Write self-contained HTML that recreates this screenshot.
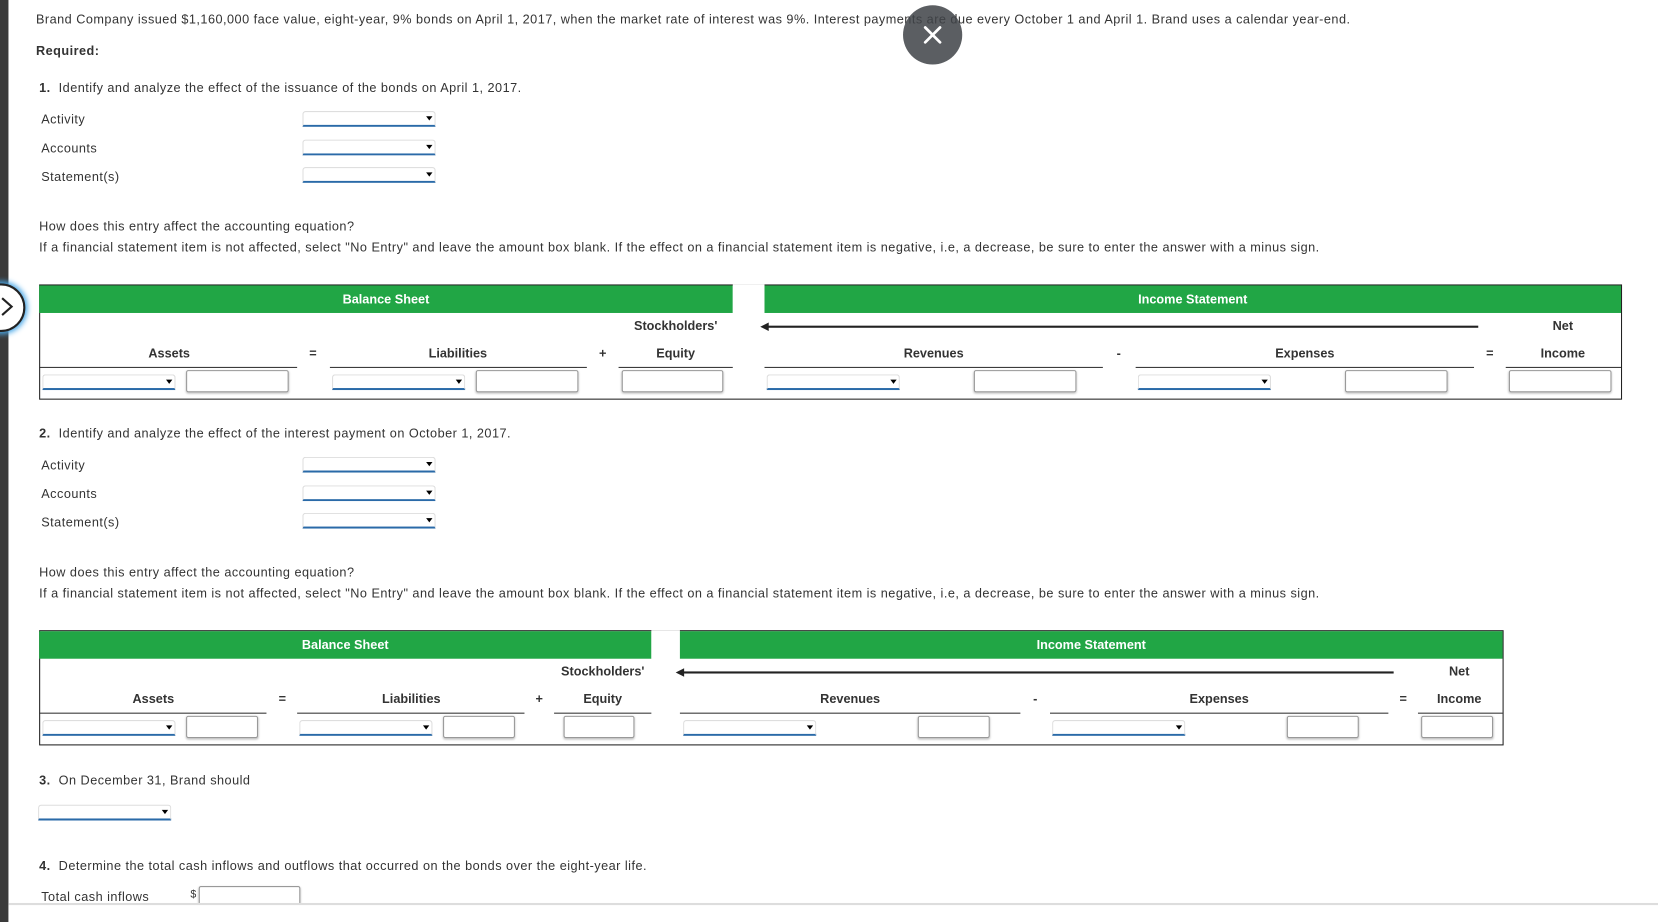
<!DOCTYPE html>
<html><head><meta charset="utf-8">
<style>
html,body{margin:0;padding:0;background:#fff;overflow:hidden;width:1658px;height:922px}
#w{position:absolute;left:0;top:0;width:1568px;height:872px;transform:scale(1.05740,1.05734);transform-origin:0 0;font-family:"Liberation Sans","DejaVu Sans",sans-serif;font-size:12px;color:#333}
.t{position:absolute;white-space:nowrap;line-height:14px;letter-spacing:0.45px}
.b{font-weight:bold}
.dd{position:absolute;height:12px;border:1px solid #ddd;border-bottom:2px solid #2a6aa8;border-radius:3px 3px 0 0;box-sizing:content-box}
.dd:after{content:"";position:absolute;right:2px;top:4px;border-left:3px solid transparent;border-right:3px solid transparent;border-top:4px solid #000}
.in{position:absolute;height:21px;border:1px solid #999;border-radius:2px;box-shadow:0 1px 2px #bbb;background:#fff;box-sizing:border-box}
.g{position:absolute;background:#21a645;color:#fff;font-weight:bold;text-align:center;line-height:26px;height:26px}
.ul{position:absolute;height:1px;background:#333}
.c{position:absolute;text-align:center;font-weight:bold;width:200px;margin-left:-100px;line-height:14px}
.tb{position:absolute;border:1px solid #222;box-sizing:border-box}
</style></head><body><div id="w">
<div style="position:absolute;left:0;top:0;width:8px;height:872px;background:#3a3a3a"></div>

<div class="t" style="left:34px;top:11px">Brand Company issued $1,160,000 face value, eight-year, 9% bonds on April 1, 2017, when the market rate of interest was 9%. Interest payments are due every October 1 and April 1. Brand uses a calendar year-end.</div>
<div class="t b" style="left:34px;top:41px">Required:</div>

<div class="t" style="left:37px;top:76px"><b>1.</b>&nbsp; Identify and analyze the effect of the issuance of the bonds on April 1, 2017.</div>
<div class="t" style="left:39px;top:106px">Activity</div>
<div class="t" style="left:39px;top:133px">Accounts</div>
<div class="t" style="left:39px;top:160px">Statement(s)</div>
<div class="dd" style="left:286px;top:105px;width:124px"></div>
<div class="dd" style="left:286px;top:132px;width:124px"></div>
<div class="dd" style="left:286px;top:158px;width:124px"></div>

<div class="t" style="left:37px;top:207px">How does this entry affect the accounting equation?</div>
<div class="t" style="left:37px;top:227px">If a financial statement item is not affected, select "No Entry" and leave the amount box blank. If the effect on a financial statement item is negative, i.e, a decrease, be sure to enter the answer with a minus sign.</div>

<!-- Table 1 -->
<div class="tb" style="left:37px;top:269px;width:1497px;height:109px"></div>
<div class="g" style="left:37px;top:270px;width:656px">Balance Sheet</div>
<div style="position:absolute;left:693px;top:269px;width:30px;height:27px;background:#fff"></div>
<div class="g" style="left:723px;top:270px;width:810px">Income Statement</div>
<div class="c" style="left:639px;top:301px">Stockholders'</div>
<div style="position:absolute;left:725px;top:308px;width:673px;height:2px;background:#222"></div>
<div style="position:absolute;left:719px;top:305px;border-top:4px solid transparent;border-bottom:4px solid transparent;border-right:8px solid #222"></div>
<div class="c" style="left:1478px;top:301px">Net</div>
<div class="c" style="left:160px;top:327px">Assets</div><div class="ul" style="left:37px;top:347px;width:244px"></div>
<div class="c" style="left:296px;top:327px">=</div>
<div class="c" style="left:433px;top:327px">Liabilities</div><div class="ul" style="left:312px;top:347px;width:243px"></div>
<div class="c" style="left:570px;top:327px">+</div>
<div class="c" style="left:639px;top:327px">Equity</div><div class="ul" style="left:585px;top:347px;width:108px"></div>
<div class="c" style="left:883px;top:327px">Revenues</div><div class="ul" style="left:723px;top:347px;width:320px"></div>
<div class="c" style="left:1058px;top:327px">-</div>
<div class="c" style="left:1234px;top:327px">Expenses</div><div class="ul" style="left:1074px;top:347px;width:320px"></div>
<div class="c" style="left:1409px;top:327px">=</div>
<div class="c" style="left:1478px;top:327px">Income</div><div class="ul" style="left:1424px;top:347px;width:109px"></div>
<div class="dd" style="left:40px;top:354px;width:124px"></div>
<div class="in" style="left:176px;top:350px;width:97px"></div>
<div class="dd" style="left:314px;top:354px;width:124px"></div>
<div class="in" style="left:450px;top:350px;width:97px"></div>
<div class="in" style="left:588px;top:350px;width:96px"></div>
<div class="dd" style="left:725px;top:354px;width:124px"></div>
<div class="in" style="left:921px;top:350px;width:97px"></div>
<div class="dd" style="left:1076px;top:354px;width:124px"></div>
<div class="in" style="left:1272px;top:350px;width:97px"></div>
<div class="in" style="left:1427px;top:350px;width:97px"></div>

<div class="t" style="left:37px;top:403px"><b>2.</b>&nbsp; Identify and analyze the effect of the interest payment on October 1, 2017.</div>
<div class="t" style="left:39px;top:433px">Activity</div>
<div class="t" style="left:39px;top:460px">Accounts</div>
<div class="t" style="left:39px;top:487px">Statement(s)</div>
<div class="dd" style="left:286px;top:432px;width:124px"></div>
<div class="dd" style="left:286px;top:459px;width:124px"></div>
<div class="dd" style="left:286px;top:485px;width:124px"></div>

<div class="t" style="left:37px;top:534px">How does this entry affect the accounting equation?</div>
<div class="t" style="left:37px;top:554px">If a financial statement item is not affected, select "No Entry" and leave the amount box blank. If the effect on a financial statement item is negative, i.e, a decrease, be sure to enter the answer with a minus sign.</div>

<!-- Table 2 -->
<div class="tb" style="left:37px;top:596px;width:1385px;height:109px"></div>
<div class="g" style="left:37px;top:597px;width:579px">Balance Sheet</div>
<div style="position:absolute;left:616px;top:596px;width:27px;height:27px;background:#fff"></div>
<div class="g" style="left:643px;top:597px;width:778px">Income Statement</div>
<div class="c" style="left:570px;top:628px">Stockholders'</div>
<div style="position:absolute;left:646px;top:635px;width:672px;height:2px;background:#222"></div>
<div style="position:absolute;left:639px;top:632px;border-top:4px solid transparent;border-bottom:4px solid transparent;border-right:8px solid #222"></div>
<div class="c" style="left:1380px;top:628px">Net</div>
<div class="c" style="left:145px;top:654px">Assets</div><div class="ul" style="left:37px;top:674px;width:215px"></div>
<div class="c" style="left:267px;top:654px">=</div>
<div class="c" style="left:389px;top:654px">Liabilities</div><div class="ul" style="left:281px;top:674px;width:215px"></div>
<div class="c" style="left:510px;top:654px">+</div>
<div class="c" style="left:570px;top:654px">Equity</div><div class="ul" style="left:524px;top:674px;width:92px"></div>
<div class="c" style="left:804px;top:654px">Revenues</div><div class="ul" style="left:643px;top:674px;width:322px"></div>
<div class="c" style="left:979px;top:654px">-</div>
<div class="c" style="left:1153px;top:654px">Expenses</div><div class="ul" style="left:993px;top:674px;width:320px"></div>
<div class="c" style="left:1327px;top:654px">=</div>
<div class="c" style="left:1380px;top:654px">Income</div><div class="ul" style="left:1341px;top:674px;width:80px"></div>
<div class="dd" style="left:40px;top:681px;width:124px"></div>
<div class="in" style="left:176px;top:677px;width:68px"></div>
<div class="dd" style="left:283px;top:681px;width:124px"></div>
<div class="in" style="left:419px;top:677px;width:68px"></div>
<div class="in" style="left:533px;top:677px;width:67px"></div>
<div class="dd" style="left:646px;top:681px;width:124px"></div>
<div class="in" style="left:868px;top:677px;width:68px"></div>
<div class="dd" style="left:995px;top:681px;width:124px"></div>
<div class="in" style="left:1217px;top:677px;width:68px"></div>
<div class="in" style="left:1344px;top:677px;width:68px"></div>

<div class="t" style="left:37px;top:731px"><b>3.</b>&nbsp; On December 31, Brand should</div>
<div class="dd" style="left:36px;top:761px;width:124px"></div>

<div class="t" style="left:37px;top:812px"><b>4.</b>&nbsp; Determine the total cash inflows and outflows that occurred on the bonds over the eight-year life.</div>
<div class="t" style="left:39px;top:841px">Total cash inflows</div>
<div class="t" style="left:180px;top:840px;font-size:10px">$</div>
<div class="in" style="left:188px;top:838px;width:96px;height:20px"></div>
<div style="position:absolute;left:8px;top:854px;width:1560px;height:18px;background:#fff;border-top:2px solid #ddd"></div>

<!-- overlays -->
<div style="position:absolute;left:854px;top:5px;width:56px;height:56px;border-radius:50%;background:rgba(64,67,72,0.86)"></div>
<svg style="position:absolute;left:871px;top:22px" width="22" height="22" viewBox="0 0 22 22"><path d="M4 4L18 18M18 4L4 18" stroke="#fff" stroke-width="2.6" stroke-linecap="round"/></svg>
<div style="position:absolute;left:-22px;top:268px;width:42px;height:42px;border-radius:50%;background:#fff;border:2px solid #222;box-shadow:0 0 5px 2px #4aa8e8"></div>
<svg style="position:absolute;left:0;top:280px" width="14" height="20" viewBox="0 0 14 20"><path d="M2 2L11 10L2 18" stroke="#222" stroke-width="2" fill="none"/></svg>
</div></body></html>
